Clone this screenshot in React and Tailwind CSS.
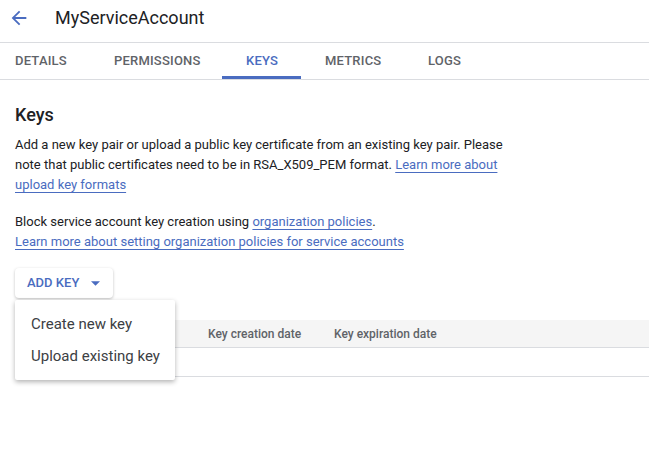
import { useState } from 'react';

const tabs = [
  { name: 'Details', cls: 'w-[90px] pl-[15px]' },
  { name: 'Permissions', cls: 'w-[132px] pl-[24px]' },
  { name: 'Keys', cls: 'w-[79px] pl-[24px]' },
  { name: 'Metrics', cls: 'w-[103px] pl-[24px]' },
  { name: 'Logs', cls: 'w-[103px] pl-[24px]' },
];

const BackArrow = () => (
  <svg viewBox="0 0 24 24" className="w-[22px] h-[22px]" fill="#4a6cc0">
    <path d="M20 11H7.83l5.59-5.59L12 4l-8 8 8 8 1.41-1.41L7.83 13H20v-2z" />
  </svg>
);

const App = () => {
  const [active] = useState('Keys');

  return (
    <div className="w-[649px] h-[463px] bg-white text-[#202124] overflow-hidden" style={{ fontFamily: 'Roboto, "Liberation Sans", sans-serif' }}>
      <header className="flex items-center h-[43px] border-b border-[#dadce0]">
        <div className="pl-[8px] w-[55px] flex items-center pb-[6px]"><BackArrow /></div>
        <h1 className="text-[18px] leading-none pb-[7px]">MyServiceAccount</h1>
      </header>

      <nav className="flex h-[37px] border-b border-[#dadce0] text-[13px] font-medium uppercase tracking-[0.2px]">
        {tabs.map((t) => (
          <div key={t.name}
            className={
              (t.name === active ? 'text-[#4a6cc0] border-b-[3px] border-[#4a6cc0] ' : 'text-[#5f6368] border-b-[3px] border-transparent ') +
              t.cls + ' flex items-center pt-[3px]'
            }
          >
            {t.name}
          </div>
        ))}
      </nav>

      <main className="px-[15px] pt-[23px]">
        <h2 className="text-[18px] font-medium leading-[24px]">Keys</h2>
        <p className="mt-[8px] text-[13px] leading-[20px] w-[500px]">
          Add a new key pair or upload a public key certificate from an existing key pair. Please note that public certificates need to be in RSA_X509_PEM format.{' '}
          <a className="text-[#4a6cc0] underline underline-offset-[3px] decoration-[#4a6cc0]">Learn more about upload key formats</a>
        </p>
        <p className="mt-[17px] text-[13px] leading-[20px]">
          Block service account key creation using{' '}
          <a className="text-[#4a6cc0] underline underline-offset-[3px]">organization policies</a>.
          <br />
          <a className="text-[#4a6cc0] underline underline-offset-[3px]">Learn more about setting organization policies for service accounts</a>
        </p>

        <div className="relative mt-[16px]">
          <button className="flex items-center h-[30px] w-[98px] pl-[12px] rounded-[4px] bg-white shadow-[0_1px_3px_rgba(0,0,0,0.25)] text-[13px] font-medium text-[#4a6cc0] uppercase">
            Add key
            <svg viewBox="0 0 10 5" className="w-[9px] h-[5px] ml-[12px]" fill="#4a6cc0"><path d="M0 0h10L5 5z" /></svg>
          </button>

          <div className="mr-[-15px] mt-[22px]">
            <div className="h-[28px] bg-[#f5f5f5] border-b border-[#dadce0] flex items-center text-[12px] font-medium text-[#5f6368]">
              <span className="pl-[193px] w-[319px]">Key creation date</span>
              <span>Key expiration date</span>
            </div>
            <div className="h-[29px] border-b border-[#dadce0]" />
          </div>

          <div className="absolute left-0 top-[32px] w-[160px] py-[8px] bg-white rounded-[2px] shadow-[0_2px_5px_rgba(0,0,0,0.3)] text-[15px] text-[#3c4043]">
            <div className="h-[32px] flex items-center pl-[16px]">Create new key</div>
            <div className="h-[32px] flex items-center pl-[16px]">Upload existing key</div>
          </div>
        </div>
      </main>
    </div>
  );
};

export default App;
